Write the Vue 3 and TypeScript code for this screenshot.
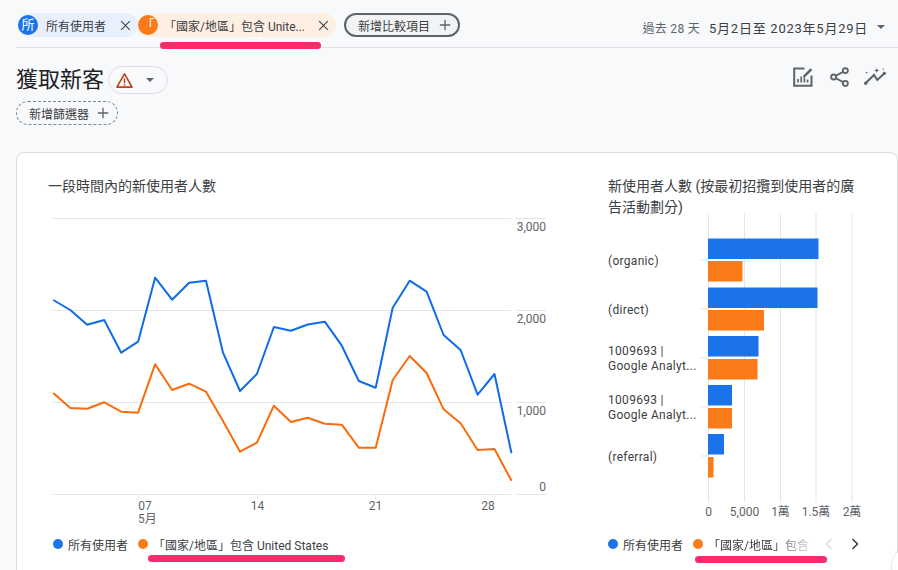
<script setup lang="ts">
const BLUE = '#1a73e8'
const ORANGE = '#fa7b17'
const xAt = (i: number) => 53.3 + i * 16.97
const blueY = [300, 310, 324.7, 320, 352.7, 341.7, 277.7, 299.7, 282.7, 280.7, 352.7, 391, 374, 327, 330.7, 324.5, 321.7, 345.7, 381, 387.7, 307.7, 280.7, 291.7, 335, 350, 394.7, 374, 453.3]
const orangeY = [393, 408, 408.7, 402.3, 411.7, 412.7, 364.3, 390, 383.7, 391.7, 421, 451.7, 442.7, 405.7, 422, 417.7, 423.7, 424.7, 447.7, 447.7, 380, 356, 373, 409.3, 423.3, 450, 449, 480.7]
const pts = (ys: number[]) => ys.map((y, i) => `${xAt(i).toFixed(1)},${y}`).join(' ')
const bluePoints = pts(blueY)
const orangePoints = pts(orangeY)

const grid = [218.5, 310.5, 402.5, 494.5]
const yLabels = [
  { t: '3,000', y: 231 },
  { t: '2,000', y: 323 },
  { t: '1,000', y: 415 },
  { t: '0', y: 491 },
]
const xTicks = [
  { x: 139, t: '07', lx: 145 },
  { x: 257.5, t: '14', lx: 257.5 },
  { x: 375.5, t: '21', lx: 375.5 },
  { x: 494.5, t: '28', lx: 488 },
]

const vGrid = [708.5, 744.5, 780.5, 816, 852]
const vLabels = [
  { x: 708.5, t: '0' },
  { x: 744.5, t: '5,000' },
  { x: 780.5, t: '1萬' },
  { x: 816, t: '1.5萬' },
  { x: 852, t: '2萬' },
]
const bars = [
  { y: 238.5, w: 110.5, c: BLUE },
  { y: 261, w: 34.5, c: ORANGE },
  { y: 287.5, w: 109.5, c: BLUE },
  { y: 310, w: 56, c: ORANGE },
  { y: 336, w: 50.5, c: BLUE },
  { y: 359, w: 49.5, c: ORANGE },
  { y: 385, w: 24, c: BLUE },
  { y: 408, w: 24, c: ORANGE },
  { y: 434, w: 16, c: BLUE },
  { y: 457, w: 5.5, c: ORANGE },
]
const cats = [
  { l: ['(organic)'], y: 260 },
  { l: ['(direct)'], y: 309 },
  { l: ['1009693 |', 'Google Analyt...'], y: 358 },
  { l: ['1009693 |', 'Google Analyt...'], y: 407 },
  { l: ['(referral)'], y: 456 },
]
</script>

<template>
  <div class="page">
    <header class="topbar">
      <div class="chip chip-blue">
        <span class="avatar avatar-blue">所</span>
        <span class="chip-text">所有使用者</span>
        <svg class="close" viewBox="0 0 14 14"><path d="M1.5 1.5l11 11M12.5 1.5l-11 11" /></svg>
      </div>
      <div class="chip chip-orange">
        <span class="avatar avatar-orange">「</span>
        <span class="chip-text chip-text-long">「國家/地區」包含 Unite...</span>
        <svg class="close" viewBox="0 0 14 14"><path d="M1.5 1.5l11 11M12.5 1.5l-11 11" /></svg>
        <span class="mark mark-top"></span>
      </div>
      <button class="add-compare">
        新增比較項目
        <svg class="plus" viewBox="0 0 14 14"><path d="M7 1v12M1 7h12" /></svg>
      </button>
      <div class="dates">
        <span class="preset">過去 28 天</span>
        <span class="range">5月2日至 2023年5月29日</span>
        <span class="caret"></span>
      </div>
    </header>

    <section class="titlebar">
      <div class="title-left">
        <div class="title-row">
          <h1>獲取新客</h1>
          <div class="warn-pill">
            <svg class="warn" viewBox="0 0 20 18"><path d="M10 2L2 16h16z" fill="none" stroke="#b8431a" stroke-width="1.7" stroke-linejoin="round" /><path d="M10 7v5M10 13v1.6" stroke="#b8431a" stroke-width="1.6" /></svg>
            <span class="caret caret-warn"></span>
          </div>
        </div>
        <button class="add-filter">
          新增篩選器
          <svg class="plus" viewBox="0 0 14 14"><path d="M7 1v12M1 7h12" /></svg>
        </button>
      </div>
      <div class="tools">
        <svg viewBox="0 0 20 20" class="tool tool-edit"><path d="M11.500 1.500H1.200v17.300h17.300V8.500" fill="none" stroke="#5f6368" stroke-width="2" /><path d="M5 15.500v-3.500M8.200 15.500V9.500M11.400 15.500v-5M14.600 15.500v-3" stroke="#5f6368" stroke-width="1.700" /><path d="M10.500 8.200L17.500 1.200 19.300 3l-7 7-2.300.5z" fill="#5f6368" /></svg>
        <svg viewBox="0 0 21 22.200" class="tool tool-share"><circle cx="17" cy="4" r="2.800" fill="none" stroke="#5f6368" stroke-width="2" /><circle cx="4" cy="11.100" r="2.800" fill="none" stroke="#5f6368" stroke-width="2" /><circle cx="17" cy="18.200" r="2.800" fill="none" stroke="#5f6368" stroke-width="2" /><path d="M6.500 9.700l8-4.300M6.500 12.500l8 4.300" stroke="#5f6368" stroke-width="2" /></svg>
        <svg viewBox="0 0 22 18" class="tool tool-spark"><path d="M1.500 15.300L10 7l3.300 5L20.500 5.300" fill="none" stroke="#5f6368" stroke-width="2.100" /><circle cx="1.700" cy="15.300" r="1.700" fill="#5f6368" /><circle cx="20.400" cy="5.300" r="1.600" fill="#5f6368" /><path d="M12.700 0l.7 1.800 1.800.7-1.800.7-.7 1.800-.7-1.800-1.800-.7 1.800-.7zM2.700 3.300l.4 1 1 .4-1 .4-.4 1-.4-1-1-.4 1-.4zM19.300 0l.3.800.8.3-.8.3-.3.800-.3-.8-.8-.3.8-.3z" fill="#5f6368" /></svg>
      </div>
    </section>

    <section class="card">
      <svg class="chart" viewBox="0 0 898 570" width="898" height="570">
        <g class="grid">
          <line v-for="y in grid" :key="y" x1="53" x2="511" :y1="y" :y2="y" />
          <line v-for="y in grid" :key="'r' + y" x1="516" x2="546" :y1="y" :y2="y" />
          <line v-for="t in xTicks" :key="t.t" :x1="t.x" :x2="t.x" y1="494" y2="499" />
        </g>
        <text v-for="l in yLabels" :key="l.t" class="axis" x="546" :y="l.y" text-anchor="end">{{ l.t }}</text>
        <text v-for="t in xTicks" :key="'x' + t.t" class="axis" :x="t.lx" y="510" text-anchor="middle">{{ t.t }}</text>
        <text class="axis" x="138" y="523">5月</text>
        <polyline :points="bluePoints" fill="none" stroke="#0f6ce6" stroke-width="2" stroke-linejoin="round" />
        <polyline :points="orangePoints" fill="none" stroke="#f76c0c" stroke-width="2" stroke-linejoin="round" />

        <g class="grid">
          <line v-for="x in vGrid" :key="x" :x1="x" :x2="x" y1="213" y2="502" />
          <line v-for="c in cats" :key="c.y" x1="701" x2="708" :y1="c.y" :y2="c.y" />
        </g>
        <rect v-for="b in bars" :key="b.y" x="708" :y="b.y" :width="b.w" height="20.500" :fill="b.c" />
        <template v-for="c in cats" :key="'c' + c.y">
          <text v-if="c.l.length === 1" class="cat" x="608" :y="c.y + 4.500">{{ c.l[0] }}</text>
          <template v-else>
            <text class="cat" x="608" :y="c.y - 3">{{ c.l[0] }}</text>
            <text class="cat" x="608" :y="c.y + 11.500">{{ c.l[1] }}</text>
          </template>
        </template>
        <text v-for="l in vLabels" :key="l.t" class="axis" :x="l.x" y="516" text-anchor="middle">{{ l.t }}</text>
      </svg>

      <div class="col col-left">
        <h2>一段時間內的新使用者人數</h2>
        <div class="legend">
          <span class="dot dot-blue"></span><span class="lg lg-first">所有使用者</span>
          <span class="dot dot-orange"></span><span class="lg">「國家/地區」包含 United States</span>
          <span class="mark mark-left"></span>
        </div>
      </div>
      <div class="col col-right">
        <h2>新使用者人數 (按最初招攬到使用者的廣告活動劃分)</h2>
        <div class="legend legend-right">
          <span class="dot dot-blue"></span><span class="lg lg-first">所有使用者</span>
          <span class="dot dot-orange"></span><span class="lg lg-fade">「國家/地區」包含</span>
          <svg class="pager pager-off" viewBox="0 0 8 12"><path d="M6.500 1L1.500 6l5 5" /></svg>
          <svg class="pager" viewBox="0 0 8 12"><path d="M1.500 1l5 5-5 5" /></svg>
          <span class="mark mark-right"></span>
        </div>
      </div>
      <span class="fab"></span>
    </section>
  </div>
</template>

<style scoped>
.page {
  width: 898px;
  height: 570px;
  overflow: hidden;
  background: #f8f9fb;
  font-family: Roboto, "Noto Sans CJK TC", sans-serif;
  color: #3c4043;
}
.topbar {
  display: flex;
  align-items: center;
  height: 48px;
  margin-left: 16px;
  padding-top: 3px;
  box-sizing: border-box;
  border-bottom: 1px solid #e1e3e6;
}
.chip {
  position: relative;
  display: flex;
  align-items: center;
  height: 24px;
  border-radius: 12px;
  font-size: 12px;
}
.chip-blue {
  width: 120px;
  margin-left: 2px;
  background: #e8f0fe;
}
.chip-orange {
  width: 198px;
  background: #feefe3;
}
.avatar {
  width: 20px;
  height: 20px;
  flex: none;
  border-radius: 50%;
  color: #fff;
  font-size: 13px;
  line-height: 20px;
  text-align: center;
}
.avatar-blue { background: #1a73e8; }
.avatar-orange { background: #fa7b17; }
.chip-text { margin-left: 8px; white-space: nowrap; }
.chip-text-long { margin-left: 6px; }
.close {
  position: absolute;
  right: 7px;
  top: 6.500px;
  width: 11px;
  height: 11px;
  fill: none;
  stroke: #3c4043;
  stroke-width: 1.400;
}
.mark {
  position: absolute;
  height: 7px;
  border-radius: 4px;
  background: #fb2a6b;
}
.mark-top { left: 22px; bottom: -12px; width: 161px; z-index: 2; }
.add-compare {
  display: flex;
  align-items: center;
  gap: 9px;
  height: 24px;
  margin-left: 8px;
  padding: 0 7px 0 12px;
  box-sizing: border-box;
  border: 2px solid #5f6368;
  border-radius: 12px;
  background: #f1f3f4;
  color: #3c4043;
  font: inherit;
  font-size: 12px;
}
.plus {
  width: 12px;
  height: 12px;
  fill: none;
  stroke: #5f6368;
  stroke-width: 1.500;
}
.dates {
  display: flex;
  align-items: center;
  margin-left: auto;
  margin-top: 4px;
  padding-right: 13px;
  font-size: 12px;
}
.preset { color: #5f6368; margin-right: 9px; letter-spacing: 0.3px; }
.range { color: #3c4043; font-size: 13px; letter-spacing: 0.75px; }
.caret {
  width: 0;
  height: 0;
  margin-left: 9px;
  border-left: 4.500px solid transparent;
  border-right: 4.500px solid transparent;
  border-top: 4.500px solid #5f6368;
}
.titlebar {
  display: flex;
  justify-content: space-between;
  height: 104px;
  padding: 18px 12px 0 16px;
  box-sizing: border-box;
}
.title-row {
  display: flex;
  align-items: center;
  gap: 4px;
}
h1 {
  margin: 0;
  font-size: 22px;
  font-weight: 400;
  line-height: 28px;
  color: #202124;
}
.warn-pill {
  display: flex;
  align-items: center;
  width: 60px;
  height: 28px;
  padding-left: 6px;
  box-sizing: border-box;
  border: 1px solid #dadce0;
  border-radius: 14px;
}
.warn { width: 19px; height: 17px; }
.caret-warn { margin-left: 12px; }
.add-filter {
  display: flex;
  align-items: center;
  gap: 8px;
  height: 24px;
  margin-top: 7px;
  padding: 0 8px 0 12px;
  border: 1px dashed #80868b;
  border-radius: 12px;
  background: transparent;
  color: #3c4043;
  font: inherit;
  font-size: 12px;
}
.tools {
  display: flex;
  align-items: flex-start;
  margin-top: 1px;
}
.tool { flex: none; }
.tool-edit { width: 20px; height: 20px; margin-right: 17px; }
.tool-share { width: 19px; height: 20px; margin-right: 15px; }
.tool-spark { width: 22px; height: 18px; margin-top: 1px; }
.card {
  position: relative;
  display: flex;
  height: 430px;
  margin-left: 16px;
  border: 1px solid #dadce0;
  border-radius: 8px;
  background: #fff;
  box-sizing: border-box;
}
.chart {
  position: absolute;
  left: -17px;
  top: -153px;
}
.grid line { stroke: #e4e5e7; stroke-width: 1; }
.axis { font-size: 12px; fill: #5f6368; }
.cat { font-size: 12px; fill: #3c4043; letter-spacing: 0.3px; }
.col {
  position: relative;
  display: flex;
  flex-direction: column;
  justify-content: space-between;
  height: 100%;
}
.col-left { width: 560px; padding-left: 31px; box-sizing: border-box; }
.col-right { width: 260px; padding-left: 31px; }
h2 {
  margin: 23px 0 0;
  font-size: 14px;
  font-weight: 400;
  line-height: 20.500px;
  color: #3c4043;
}
.col-right h2 { width: 250px; }
.legend {
  position: relative;
  display: flex;
  align-items: center;
  height: 20px;
  margin: 0 0 27px 5px;
  font-size: 12px;
  color: #3c4043;
  white-space: nowrap;
}
.legend-right { margin-left: 0; }
.dot { width: 10px; height: 10px; border-radius: 50%; flex: none; margin-right: 5px; }
.dot-blue { background: #1a73e8; }
.dot-orange { background: #fa7b17; }
.lg-first { margin-right: 10px; }
.lg-fade {
  width: 117px;
  overflow: hidden;
  -webkit-mask-image: linear-gradient(to right, #000 55%, transparent 95%);
  mask-image: linear-gradient(to right, #000 55%, transparent 95%);
}
.pager {
  width: 8px;
  height: 12px;
  margin-left: 18px;
  flex: none;
  fill: none;
  stroke: #3c4043;
  stroke-width: 1.600;
}
.pager-off { stroke: #dadce0; margin-left: 0; }
.mark-left { left: 95px; top: 21px; width: 197px; }
.mark-right { left: 87px; top: 22px; width: 132px; }
.fab {
  position: absolute;
  left: 875px;
  top: 392px;
  width: 44px;
  height: 44px;
  border-radius: 50%;
  background: #fff;
  box-shadow: 0 1px 3px rgba(60, 64, 67, 0.3);
}
</style>
